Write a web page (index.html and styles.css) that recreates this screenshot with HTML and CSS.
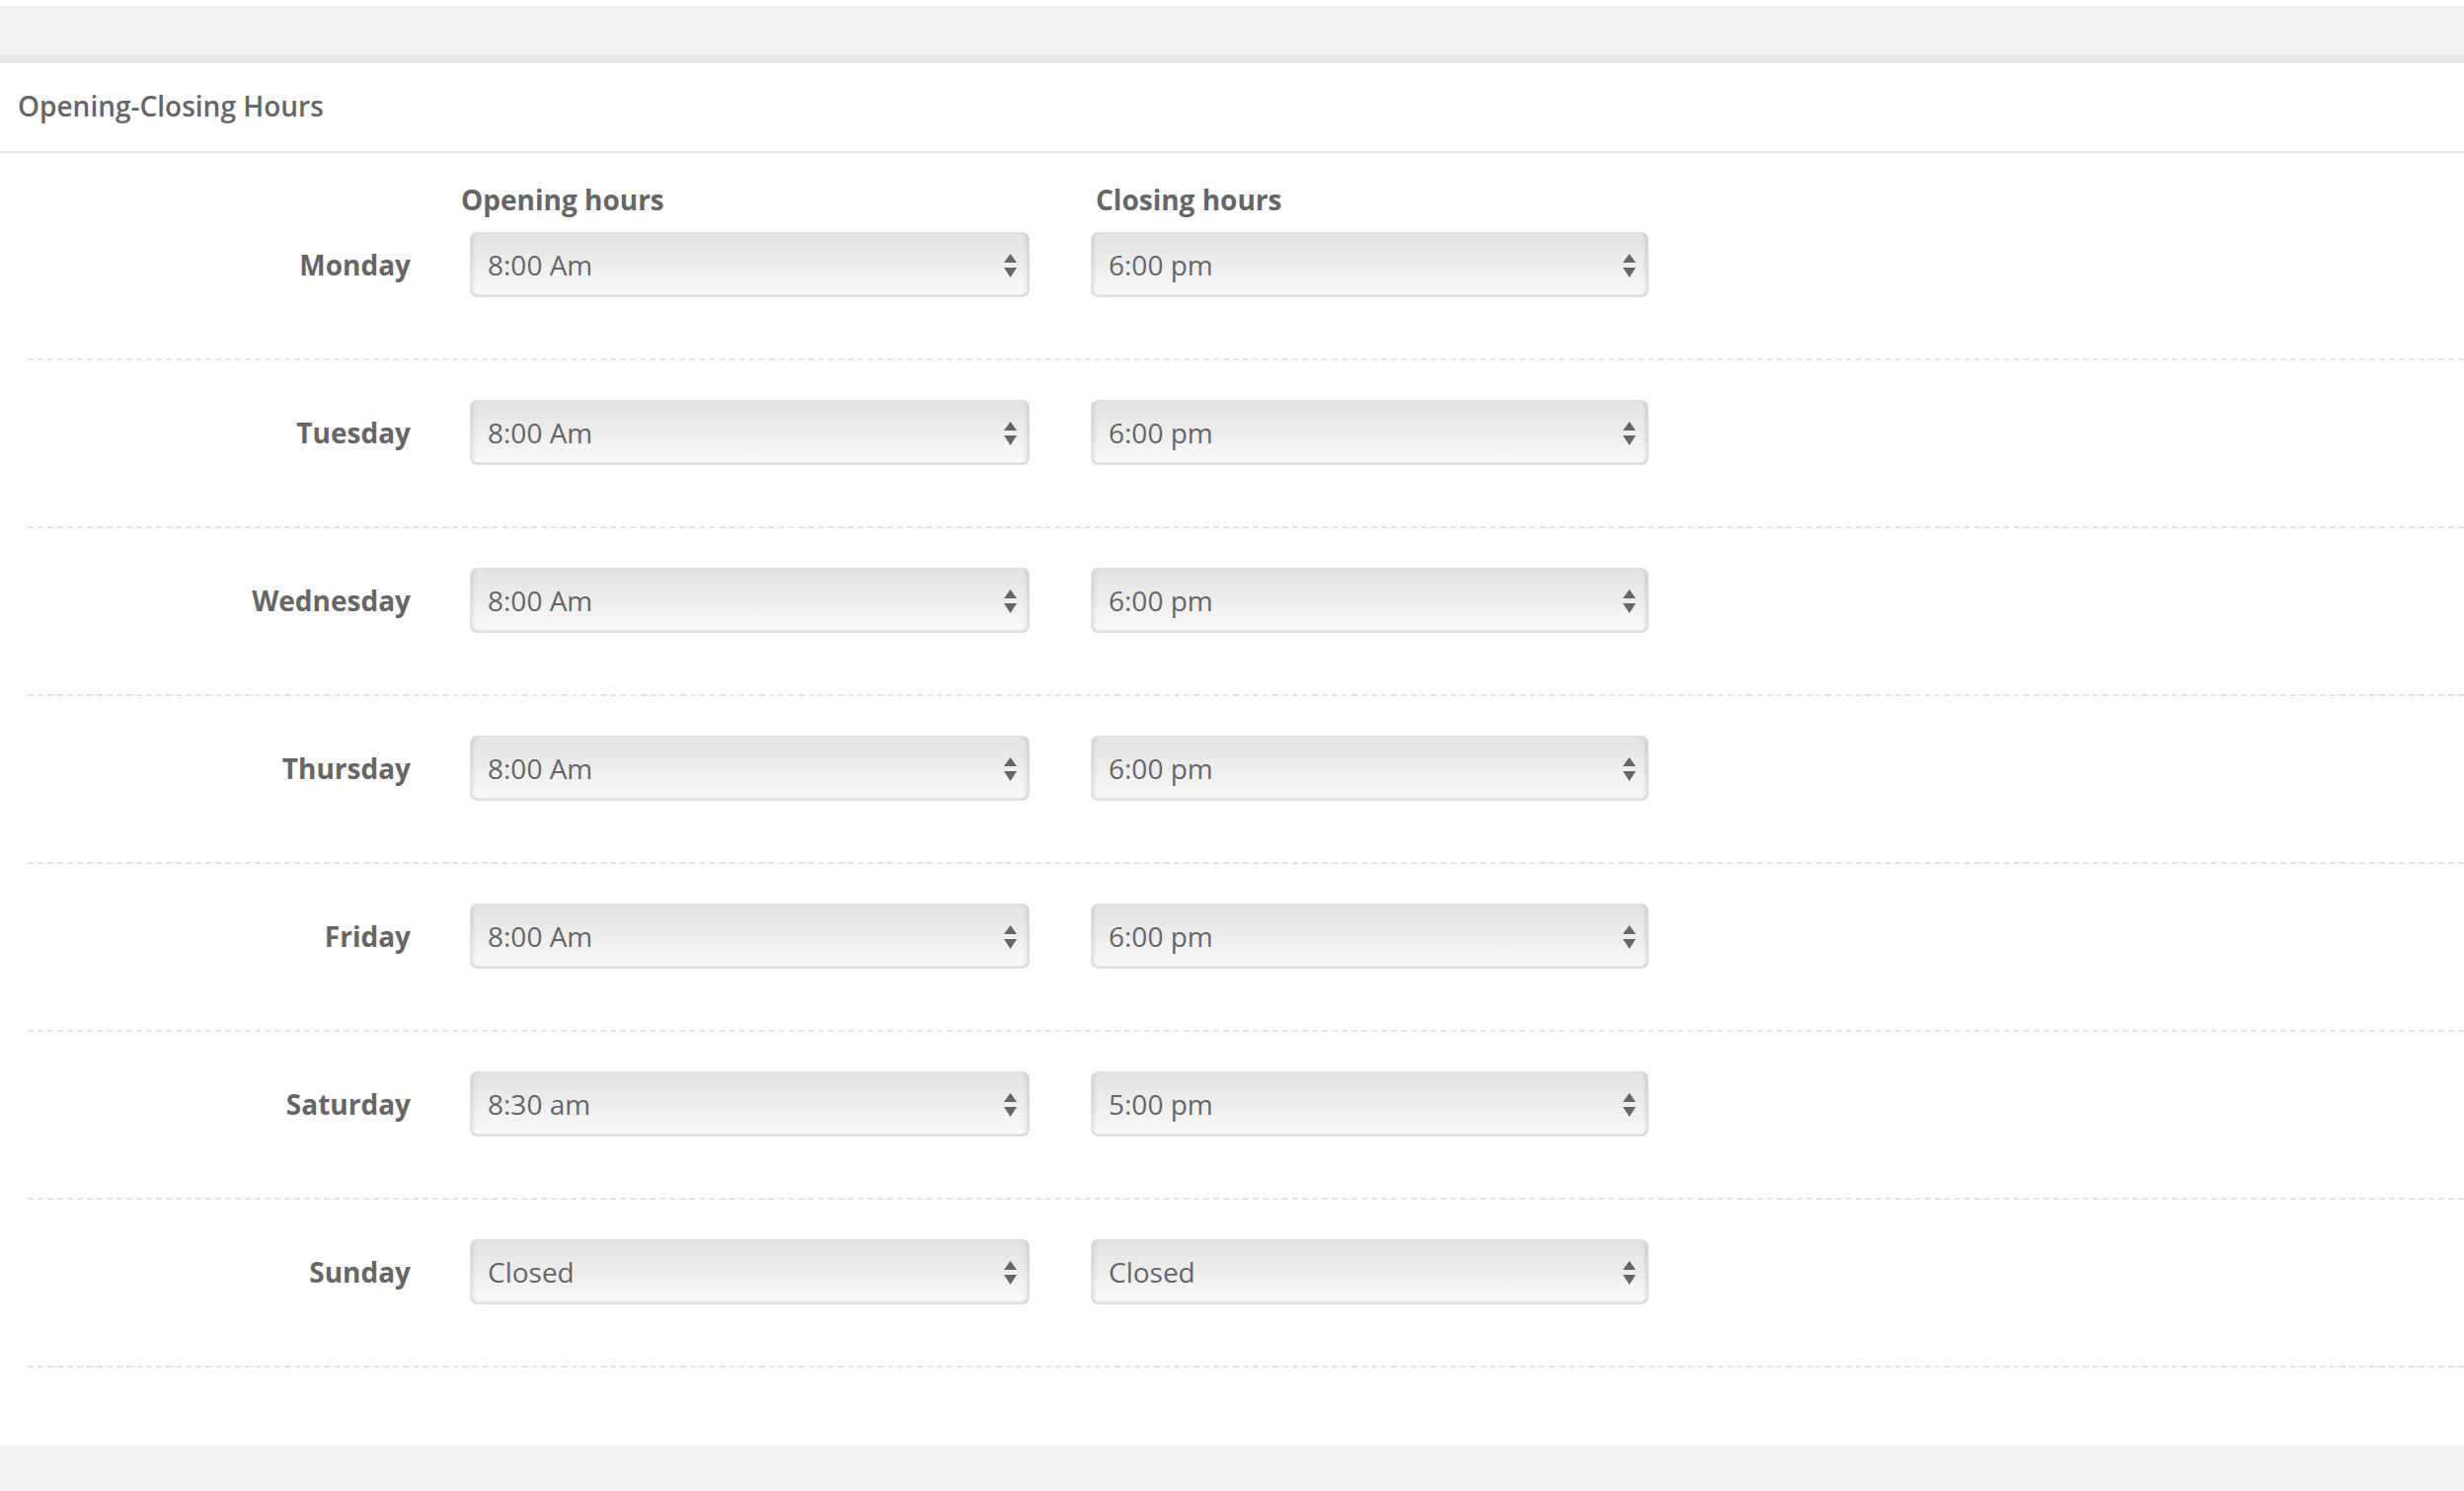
FILE: index.html
```html
<!DOCTYPE html>
<html lang="en">
<head>
<meta charset="utf-8">
<title>Opening-Closing Hours</title>
<link rel="stylesheet" href="styles.css">
</head>
<body>
<div class="topbar"></div>
<section class="panel">
  <header class="panel-head">Opening-Closing Hours</header>
  <div class="panel-body">
    <div class="heads">
      <div class="spacer"></div>
      <div class="col-head open">Opening hours</div>
      <div class="col-head close">Closing hours</div>
    </div>

    <div class="row first">
      <div class="day">Monday</div>
      <div class="select sel-open"><span>8:00 Am</span><svg class="arrows" viewBox="0 0 13 24"><path d="M6.5 0L13 9H0z"/><path d="M0 14h13l-6.5 10z"/></svg></div>
      <div class="select sel-close"><span>6:00 pm</span><svg class="arrows" viewBox="0 0 13 24"><path d="M6.5 0L13 9H0z"/><path d="M0 14h13l-6.5 10z"/></svg></div>
    </div>

    <div class="row">
      <div class="day">Tuesday</div>
      <div class="select sel-open"><span>8:00 Am</span><svg class="arrows" viewBox="0 0 13 24"><path d="M6.5 0L13 9H0z"/><path d="M0 14h13l-6.5 10z"/></svg></div>
      <div class="select sel-close"><span>6:00 pm</span><svg class="arrows" viewBox="0 0 13 24"><path d="M6.5 0L13 9H0z"/><path d="M0 14h13l-6.5 10z"/></svg></div>
    </div>

    <div class="row">
      <div class="day">Wednesday</div>
      <div class="select sel-open"><span>8:00 Am</span><svg class="arrows" viewBox="0 0 13 24"><path d="M6.5 0L13 9H0z"/><path d="M0 14h13l-6.5 10z"/></svg></div>
      <div class="select sel-close"><span>6:00 pm</span><svg class="arrows" viewBox="0 0 13 24"><path d="M6.5 0L13 9H0z"/><path d="M0 14h13l-6.5 10z"/></svg></div>
    </div>

    <div class="row">
      <div class="day">Thursday</div>
      <div class="select sel-open"><span>8:00 Am</span><svg class="arrows" viewBox="0 0 13 24"><path d="M6.5 0L13 9H0z"/><path d="M0 14h13l-6.5 10z"/></svg></div>
      <div class="select sel-close"><span>6:00 pm</span><svg class="arrows" viewBox="0 0 13 24"><path d="M6.5 0L13 9H0z"/><path d="M0 14h13l-6.5 10z"/></svg></div>
    </div>

    <div class="row">
      <div class="day">Friday</div>
      <div class="select sel-open"><span>8:00 Am</span><svg class="arrows" viewBox="0 0 13 24"><path d="M6.5 0L13 9H0z"/><path d="M0 14h13l-6.5 10z"/></svg></div>
      <div class="select sel-close"><span>6:00 pm</span><svg class="arrows" viewBox="0 0 13 24"><path d="M6.5 0L13 9H0z"/><path d="M0 14h13l-6.5 10z"/></svg></div>
    </div>

    <div class="row">
      <div class="day">Saturday</div>
      <div class="select sel-open"><span>8:30 am</span><svg class="arrows" viewBox="0 0 13 24"><path d="M6.5 0L13 9H0z"/><path d="M0 14h13l-6.5 10z"/></svg></div>
      <div class="select sel-close"><span>5:00 pm</span><svg class="arrows" viewBox="0 0 13 24"><path d="M6.5 0L13 9H0z"/><path d="M0 14h13l-6.5 10z"/></svg></div>
    </div>

    <div class="row">
      <div class="day">Sunday</div>
      <div class="select sel-open"><span>Closed</span><svg class="arrows" viewBox="0 0 13 24"><path d="M6.5 0L13 9H0z"/><path d="M0 14h13l-6.5 10z"/></svg></div>
      <div class="select sel-close"><span>Closed</span><svg class="arrows" viewBox="0 0 13 24"><path d="M6.5 0L13 9H0z"/><path d="M0 14h13l-6.5 10z"/></svg></div>
    </div>
  </div>
</section>
<div class="footer"></div>
</body>
</html>
```

FILE: styles.css
```css
* { box-sizing: border-box; }

html, body {
  margin: 0;
  padding: 0;
}

body {
  min-height: 100vh;
  display: flex;
  flex-direction: column;
  background: #ffffff;
  font-family: "Open Sans", "Liberation Sans", sans-serif;
  color: #666666;
}

.topbar {
  margin-top: 6px;
  height: 58px;
  background: #f2f2f2;
  border-bottom: 8px solid #e8e9eb;
}

.panel {
  background: #ffffff;
}

.panel-head {
  height: 91px;
  padding: 0 0 3px 18px;
  font-size: 28px;
  line-height: 86px;
  font-weight: 600;
  color: #666666;
  border-bottom: 2px solid #e6e6e6;
}

.panel-body {
  padding: 29px 0 79px 28px;
}

.heads {
  display: flex;
  height: 36px;
  margin-bottom: 15px;
  font-size: 28px;
  line-height: 36px;
  font-weight: 700;
  color: #666666;
}

.heads .spacer {
  width: 388px;
}

.col-head.open {
  width: 567px;
  margin-left: 51px;
}

.col-head.close {
  margin-left: 76px;
}

.row {
  display: flex;
  align-items: center;
  padding: 40px 0 62px;
  border-bottom: 2px dashed #e5e5e5;
}

.row.first {
  padding-top: 0;
}

.day {
  width: 388px;
  text-align: right;
  font-size: 28px;
  font-weight: 700;
  color: #666666;
}

.select {
  position: relative;
  height: 66px;
  display: flex;
  align-items: center;
  padding-left: 17px;
  font-size: 28px;
  color: #666666;
  border: 1px solid #e0e0e0;
  border-radius: 7px;
  background: linear-gradient(#e4e4e4 0%, #ececec 45%, #f6f6f6 80%, #fafafa 100%);
  box-shadow:
    inset 5px 0 4px -3px rgba(0, 0, 0, 0.10),
    inset -5px 0 4px -3px rgba(0, 0, 0, 0.12),
    inset 0 -2px 0 #e6e6e6;
}

.sel-open {
  width: 567px;
  margin-left: 60px;
}

.sel-close {
  width: 565px;
  margin-left: 62px;
}

.arrows {
  position: absolute;
  right: 12px;
  top: 21px;
  width: 13px;
  height: 24px;
  fill: #666666;
}

.footer {
  flex: 1;
  background: #f2f2f2;
}
```
